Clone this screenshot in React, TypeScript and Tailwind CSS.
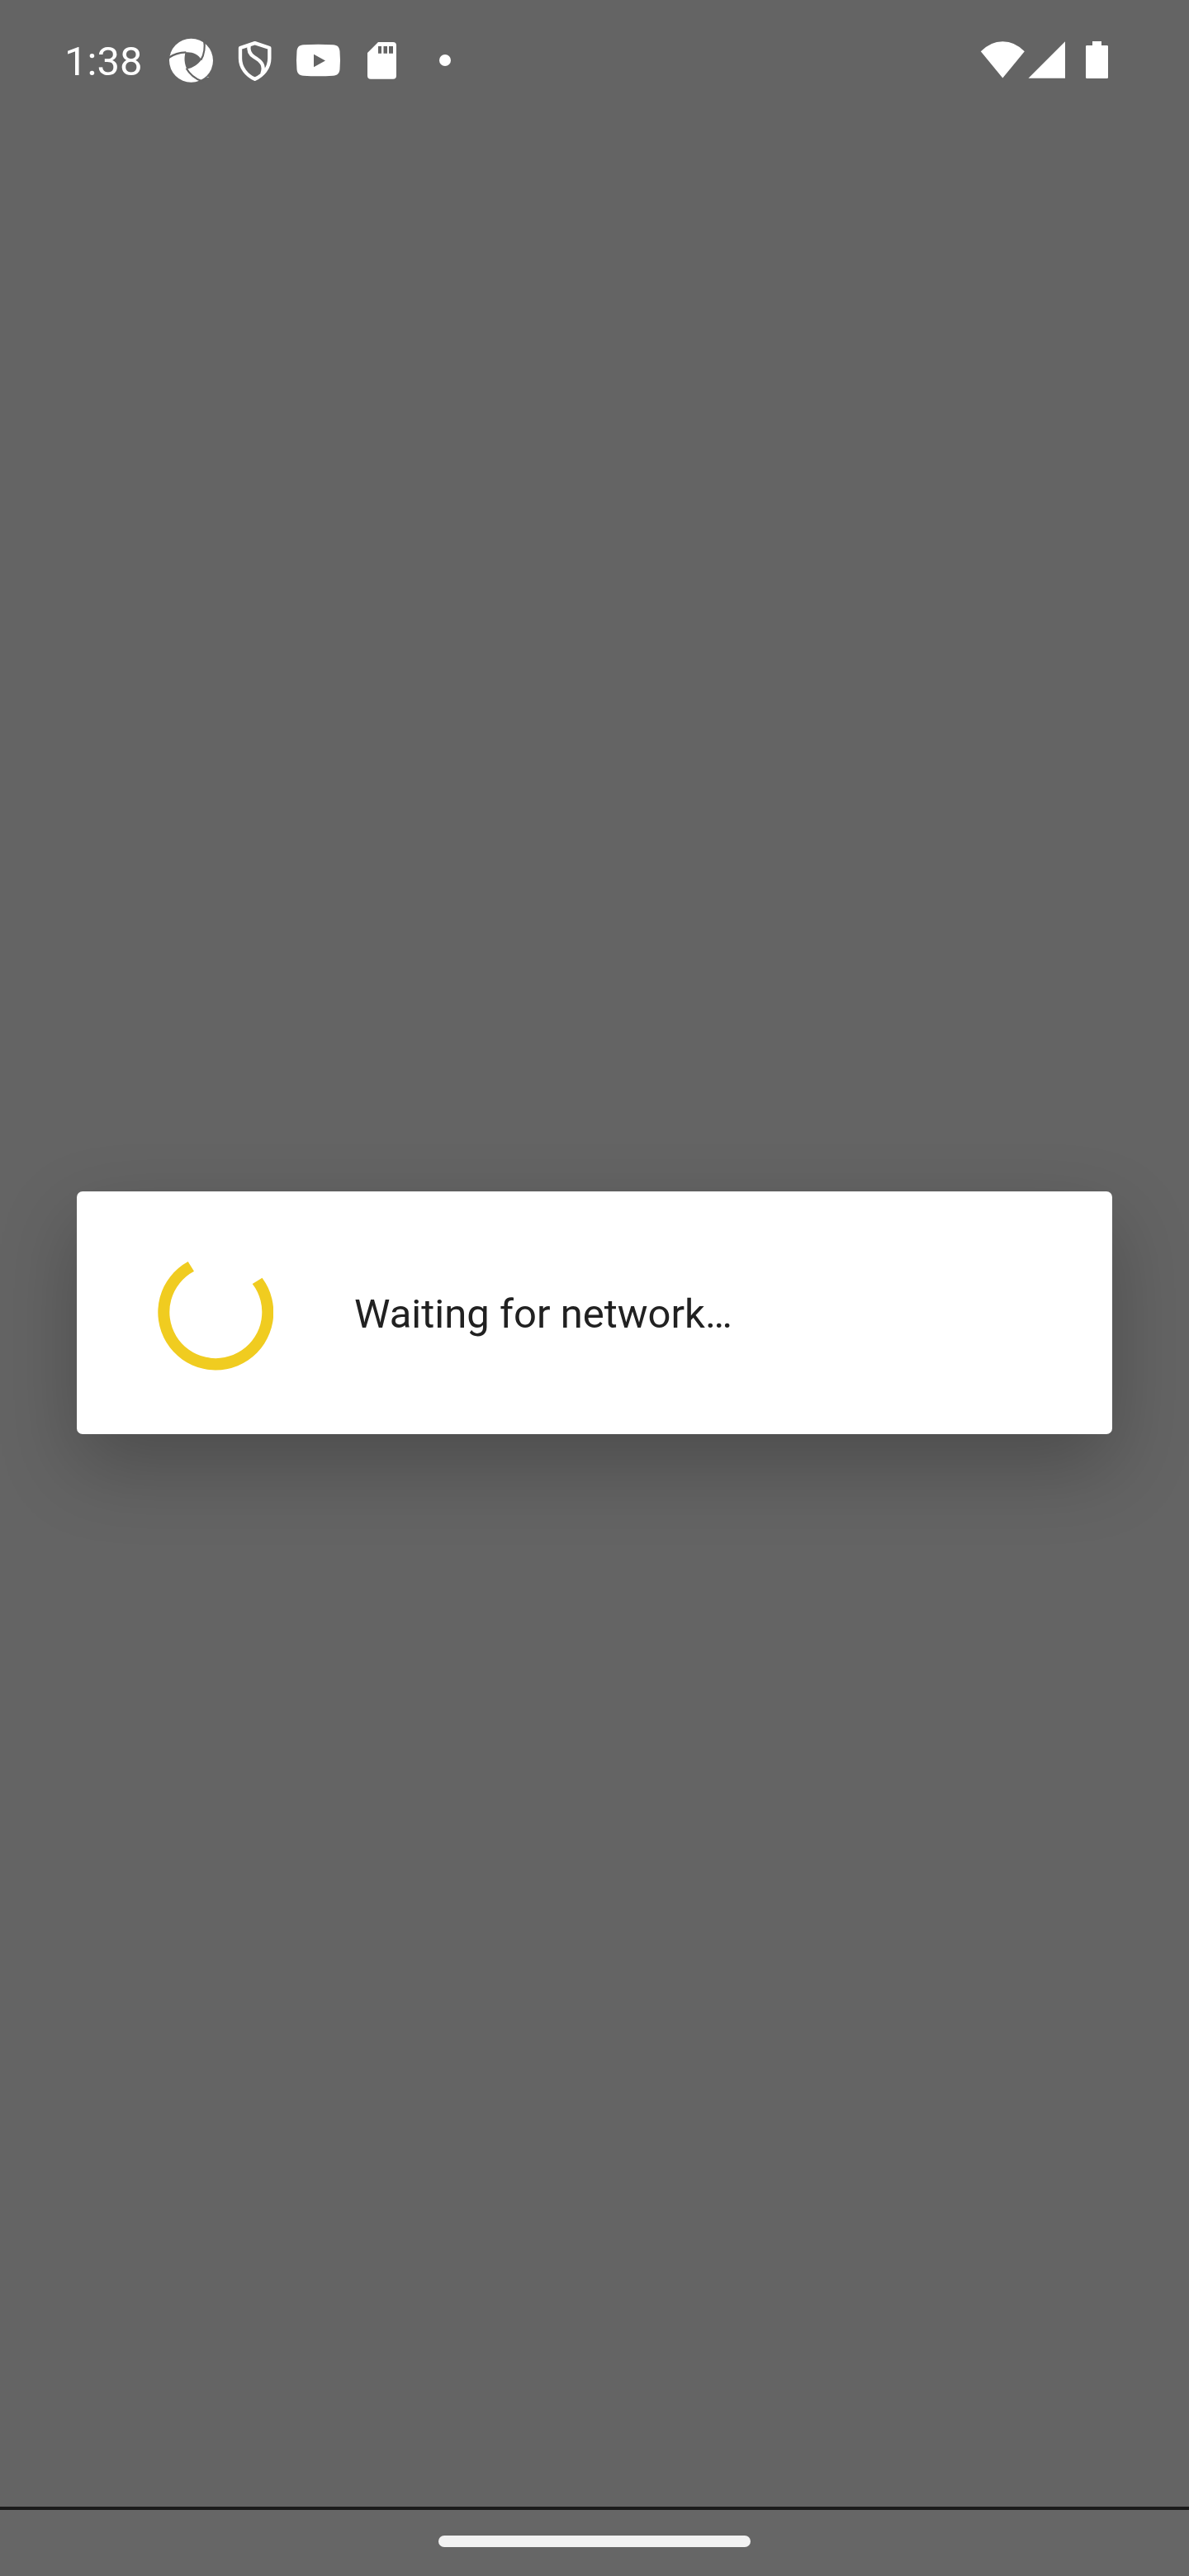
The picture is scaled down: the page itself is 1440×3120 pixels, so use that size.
import type { ReactNode } from "react";

function Glyph({ className, viewBox, children }: { className: string; viewBox: string; children: ReactNode }) {
  return (
    <svg className={`block h-[90px] shrink-0 ${className}`} viewBox={viewBox} fill="#fff" aria-hidden="true">
      {children}
    </svg>
  );
}

function StatusBar() {
  return (
    <header className="flex h-[148px] items-start pt-[30px] text-white">
      <div className="w-[204px] shrink-0 pl-[78px] text-[49px] leading-[89px]">1:38</div>
      <Glyph className="w-[56px]" viewBox="432 0 168 270">
        <circle cx="514.5" cy="130" r="79.5" />
        <g fill="none" stroke="#646464" strokeWidth="6.5">
          <path d="M431 121C450 107 470 101 496 100" />
          <path d="M561 54C566 82 562 108 550 128" />
          <path d="M497 158C510 181 527 195 554 205" />
        </g>
        <path fill="#646464" d="M494 100C520 98 539 107 552 127C538 146 520 157 499 161C490 142 488 121 494 100Z" />
        <path fill="#646464" d="M539 206C549 202 557 198 561 194L567 199L545 213Z" />
        <text x="571" y="198" fontSize="13">™</text>
      </Glyph>
      <Glyph className="ml-[28px] w-[42px]" viewBox="84 0 126 270">
        <g fill="none" stroke="#fff" strokeWidth="13" strokeLinejoin="round">
          <path d="M146 66.500L199 84V122C199 157 175 184 146 197.500C117 184 93 157 93 122V84Z" />
          <path d="M125 74C121 96 128 108 143 117C169 132 184 148 172 178" />
        </g>
      </Glyph>
      <Glyph className="ml-[28px] w-[55px]" viewBox="294 0 165 270">
        <path
          fillRule="evenodd"
          d="M323 73Q376 70 430 73C446 74 453 81 454.500 96Q457.500 129 454.500 162C453 177 446 184 430 185Q376 188 323 185C307 184 300 177 298.500 162Q295.500 129 298.500 96C300 81 307 74 323 73ZM360 107V154L402 130.500Z"
        />
      </Glyph>
      <Glyph className="ml-[31px] w-[37px]" viewBox="132 0 111 270">
        <path
          fillRule="evenodd"
          d="M174 63H228Q240 63 240 75V185Q240 197 228 197H147Q135 197 135 185V102ZM174 78V104H186V78ZM193.500 78V104H207V78ZM213 78V104H228V78Z"
        />
      </Glyph>
      <div className="ml-[51px] mt-[36px] size-[14px] rounded-full bg-white" />
      <Glyph className="ml-[641px] w-[55px]" viewBox="51 0 165 270">
        <path d="M53.500 97Q88 60.500 133 60.500T212.500 97L133 193.500Z" />
      </Glyph>
      <Glyph className="ml-[3px] w-[46px]" viewBox="225 0 138 270">
        <path d="M226.500 194L360 60.500V194Z" />
      </Glyph>
      <Glyph className="ml-[23px] w-[29px]" viewBox="432 0 87 270">
        <path d="M459 60H492V75H512Q516 75 516 79V191Q516 195 512 195H439Q435 195 435 191V79Q435 75 439 75H459Z" />
      </Glyph>
    </header>
  );
}

function Spinner() {
  return (
    <svg className="block size-[140px] shrink-0" viewBox="-70 -70 140 140" fill="#f0cc20" aria-hidden="true">
      <path d="M56.500 -42.300A70 70 0 1 1 -33.300 -62L-26 -50.300A56 56 0 1 0 44.700 -35Z" />
    </svg>
  );
}

export default function App() {
  return (
    <div className="flex h-[3120px] w-[1440px] flex-col overflow-hidden bg-[#646464] font-['Roboto',sans-serif]">
      <StatusBar />
      <main className="flex-1 px-[93px] pt-[1295px]">
        <div
          role="dialog"
          className="flex h-[294px] items-center rounded-[7px] bg-white pl-[98px] shadow-[0_38px_96px_rgba(0,0,0,0.24)]"
        >
          <Spinner />
          <p className="ml-[98px] pt-[4px] text-[49px] leading-[58px] text-[#212121]">Waiting for network…</p>
        </div>
      </main>
      <footer className="flex h-[84px] justify-center border-t-4 border-[#1b1b1b] bg-[#666666] pt-[31px]">
        <div className="h-[14px] w-[378px] rounded-full bg-[#f2f2f2]" />
      </footer>
    </div>
  );
}
